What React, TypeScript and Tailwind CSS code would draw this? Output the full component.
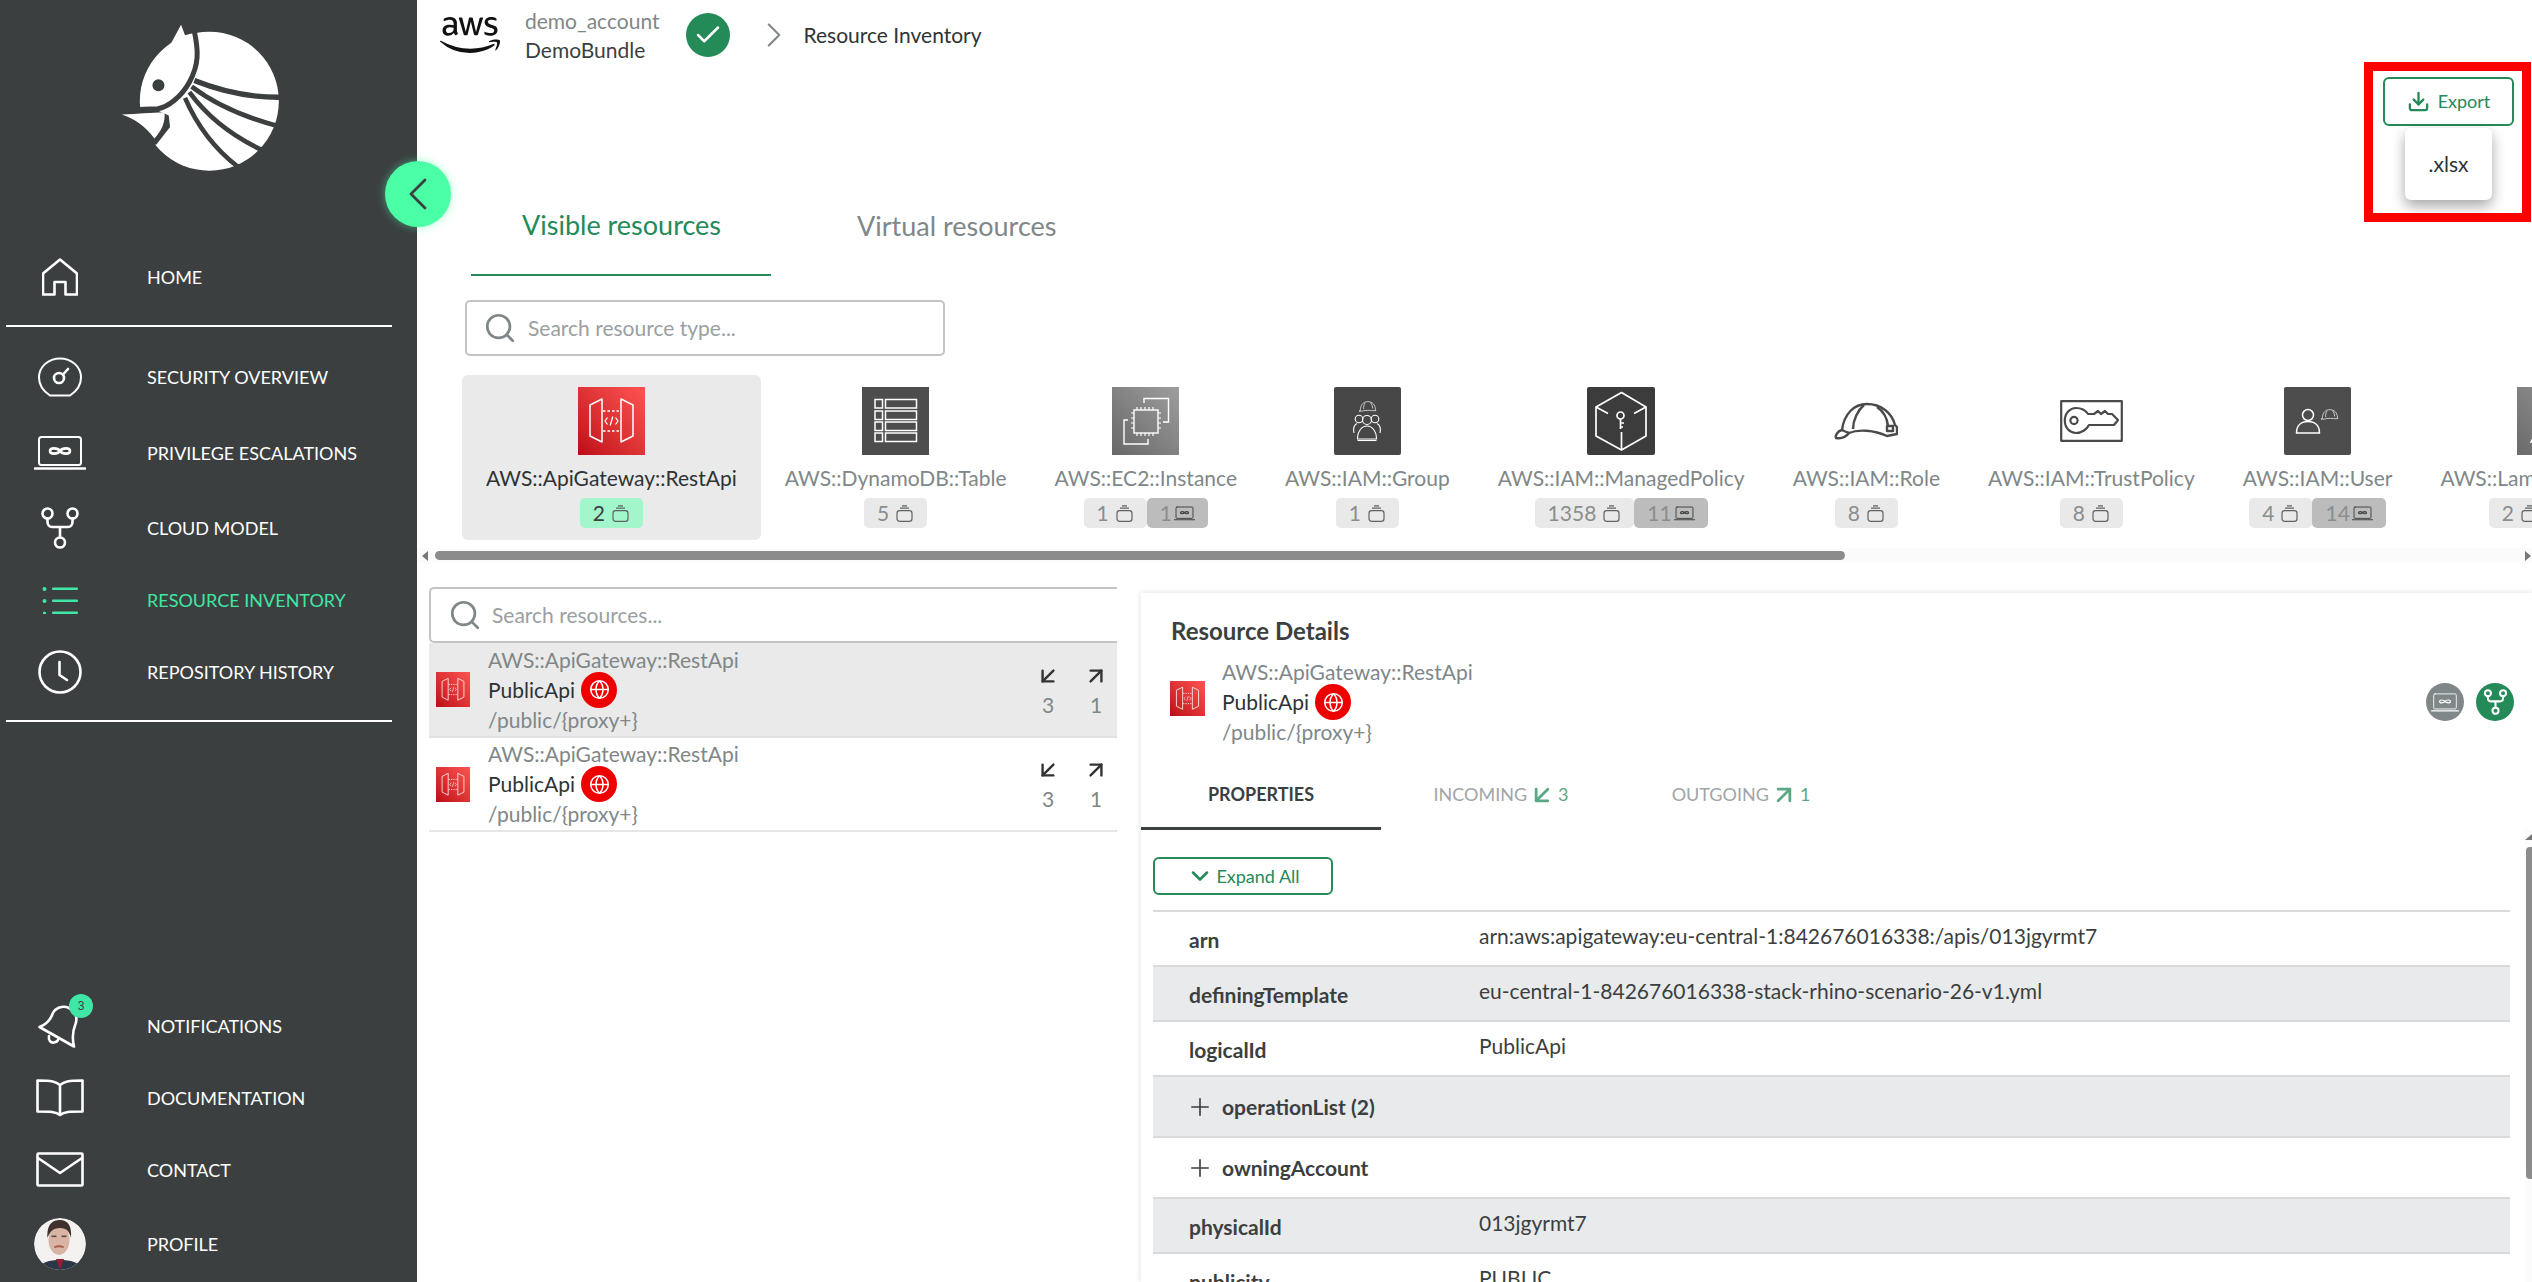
import React from "react";
import { ArrowDownLeft, ArrowUpRight, ChevronDown, ChevronLeft, ChevronRight, Check, Download, Globe, Plus, Search } from "lucide-react";
import { FaAws } from "react-icons/fa";

const Logo = () => (
  <svg viewBox="360 70 480 445" className="w-[160px] h-[148px]">
    <circle cx="625" cy="302" r="209" fill="#fff" />
    <path d="M508 132 L540 72 L552 104 L575 98 L590 150 L520 170 Z" fill="#fff" />
    <path d="M400 332 L470 330 L503 345 L507 380 L466 432 L400 445 Z" fill="#3b3f40" />
    <path d="M362 342 C410 340 450 336 490 335 C494 365 480 392 460 414 C430 375 400 355 362 342 Z" fill="#fff" />
    <g fill="none" stroke="#3b3f40" strokeLinecap="butt">
      <path d="M580 92 C592 150 595 190 565 245 C540 290 500 320 470 325 L410 327" strokeWidth="15" />
      <path d="M580 240 C660 272 750 292 845 290" strokeWidth="16" />
      <path d="M572 258 C640 310 730 350 835 378" strokeWidth="14" />
      <path d="M565 275 C620 350 700 410 785 450" strokeWidth="14" />
      <path d="M552 292 C590 380 640 445 712 500" strokeWidth="14" />
    </g>
    <circle cx="472" cy="254" r="18" fill="#3b3f40" />
  </svg>
);

const HomeIcon = () => (
  <svg viewBox="0 0 36 38" className="w-[36px] h-[38px]" fill="none" stroke="#fff" strokeWidth="2.6" strokeLinejoin="round">
    <path d="M18 1.5 L35 15.5 V36.5 H23.5 V24 H12.5 V36.5 H1 V15.5 Z" />
  </svg>
);
const GaugeIcon = () => (
  <svg viewBox="0 0 44 40" className="w-[44px] h-[40px]" fill="none" stroke="#fff" strokeWidth="2" strokeLinecap="round">
    <path d="M12 38.5 H32 C39 34 43 28 43 20.5 C43 9.5 33.5 1.5 22 1.5 C10.5 1.5 1 9.5 1 20.5 C1 28 5 34 12 38.5 Z" />
    <circle cx="21" cy="21" r="5" strokeWidth="2.6" />
    <path d="M25 17.5 L30 12" strokeWidth="2.6" />
  </svg>
);
const LaptopIcon = ({ className = "w-[52px] h-[34px]", color = "#fff", sw = 2 }: { className?: string; color?: string; sw?: number }) => (
  <svg viewBox="0 0 52 34" className={className} fill="none" stroke={color} strokeWidth={sw} strokeLinecap="round">
    <rect x="5" y="1" width="42" height="28" rx="2.5" />
    <path d="M1 32.5 H51" strokeWidth={sw + 0.6} />
    <path d="M26 15 C23.5 11.5 16 11.5 16 15 C16 18.5 23.5 18.5 26 15 C28.5 11.5 36 11.5 36 15 C36 18.5 28.5 18.5 26 15 Z" strokeWidth={sw + 0.6} />
  </svg>
);
const ModelIcon = ({ className = "w-[38px] h-[42px]", color = "#fff", sw = 2.6 }: { className?: string; color?: string; sw?: number }) => (
  <svg viewBox="0 0 38 42" className={className} fill="none" stroke={color} strokeWidth={sw} strokeLinecap="round">
    <circle cx="6.5" cy="6.5" r="5" />
    <circle cx="31.5" cy="6.5" r="5" />
    <circle cx="19" cy="35.5" r="5" />
    <path d="M6.5 11.5 V15 C6.5 18 8.5 20 11 20 H27 C29.5 20 31.5 18 31.5 15 V11.5 M19 20 V30.5" />
  </svg>
);
const ListIcon = () => (
  <svg viewBox="0 0 36 28" className="w-[36px] h-[28px]" fill="#41e6a4">
    <circle cx="2.5" cy="3" r="2" />
    <circle cx="2.5" cy="15" r="2" />
    <circle cx="2.5" cy="27" r="1.6" />
    <rect x="10" y="1.5" width="26" height="2.6" rx="1" />
    <rect x="10" y="13.5" width="26" height="2.6" rx="1" />
    <rect x="10" y="25.4" width="26" height="2.6" rx="1" />
  </svg>
);
const ClockIcon = () => (
  <svg viewBox="0 0 44 44" className="w-[44px] h-[44px]" fill="none" stroke="#fff" strokeWidth="2.6" strokeLinecap="round" strokeLinejoin="round">
    <circle cx="22" cy="22" r="20.5" />
    <path d="M21.5 12 V25 L29 30" />
  </svg>
);
const BellIcon = () => (
  <div className="relative w-[44px] h-[44px]">
    <svg viewBox="0 0 44 44" className="w-[44px] h-[44px]" fill="none" stroke="#fff" strokeWidth="2.6" strokeLinejoin="round" strokeLinecap="round">
      <path d="M1.5 23 C7 21 12 17 14.5 10 C17 3.5 25 1 31 4 C37 7 40 13 37.5 20 C35 26 33.5 32 36 42.5 Z" />
      <path d="M11 32 C10 36.5 13 39 16 38.5 C18 38.2 19.5 37.2 20 36" />
    </svg>
    <span className="absolute -top-[10px] right-[-11px] w-[24px] h-[24px] rounded-full bg-[#41e6a4] flex items-center justify-center text-[12px] leading-none text-[#3b3f40] font-['Liberation_Sans',sans-serif]">3</span>
  </div>
);
const BookIcon = () => (
  <svg viewBox="0 0 48 38" className="w-[48px] h-[38px]" fill="none" stroke="#fff" strokeWidth="2.6" strokeLinejoin="round">
    <path d="M24 6 C20 2.5 16 1.5 1.5 1.5 V32.5 C14 32.5 20 32.5 24 36 C28 32.5 34 32.5 46.5 32.5 V1.5 C32 1.5 28 2.5 24 6 Z M24 6 V36" />
  </svg>
);
const MailIcon = () => (
  <svg viewBox="0 0 48 36" className="w-[48px] h-[36px]" fill="none" stroke="#fff" strokeWidth="2.6" strokeLinejoin="round">
    <rect x="1.5" y="1.5" width="45" height="32" rx="1" />
    <path d="M2 6 L24 21 L46 6" />
  </svg>
);
const Avatar = () => (
  <svg viewBox="0 0 52 52" className="w-[52px] h-[52px] rounded-full overflow-hidden">
    <clipPath id="av"><circle cx="26" cy="26" r="26" /></clipPath>
    <g clipPath="url(#av)">
      <rect width="52" height="52" fill="#f3f2f0" />
      <g className="blur-[0.6px]">
        <path d="M4 52 C6 44 16 42 26 42 C36 42 46 44 48 52 Z" fill="#2b3648" />
        <path d="M22 41 L26 52 L30 41 Z" fill="#8f2035" />
        <ellipse cx="25" cy="22" rx="10.5" ry="15" fill="#d9b3a3" />
        <path d="M13.5 20 C12.5 6 19 2 26 2 C34 2 38 8 37 20 C35.5 14 33 10 26 10 C19 10 15.5 14 13.5 20 Z" fill="#3f322c" />
        <path d="M20 28.5 Q25 26 30 28.5 L29.5 30 Q25 28.6 20.5 30 Z" fill="#a2604d" />
        <rect x="17.5" y="17.5" width="5" height="1.6" fill="#5a4a44" />
        <rect x="27.5" y="17.5" width="5" height="1.6" fill="#5a4a44" />
      </g>
    </g>
  </svg>
);

const ApiIcon = ({ className = "w-[67px] h-[68px]" }: { className?: string }) => (
  <div className={`${className} bg-linear-to-tr from-[#bd0816] to-[#ff5252] shrink-0`}>
    <svg viewBox="0 0 67 68" className="w-full h-full" fill="none" stroke="#fff" strokeWidth="1.5">
      <path d="M24 12 L12 18 V49 L24 55 Z M43 12 L55 18 V49 L43 55 Z" strokeLinejoin="round" />
      <path d="M25 24 H42 M25 44 H42" strokeDasharray="2.5 2" />
      <path d="M29.5 30.5 L27 34 L29.5 37.5 M37.5 30.5 L40 34 L37.5 37.5 M34.8 29.5 L32.2 38.5" strokeWidth="1.2" />
    </svg>
  </div>
);
const DynamoIcon = () => (
  <div className="w-[67px] h-[68px] bg-[#4d4d4d] shrink-0">
    <svg viewBox="0 0 67 68" className="w-full h-full" fill="none" stroke="#fff" strokeWidth="1.5">
      {[12.5, 24, 35, 46].map((y) => (
        <g key={y}>
          <rect x="13" y={y} width="7.5" height="8.5" />
          <rect x="23.5" y={y} width="31" height="8.5" />
        </g>
      ))}
    </svg>
  </div>
);
const Ec2Icon = () => (
  <div className="w-[67px] h-[68px] bg-linear-to-tr from-[#686868] to-[#9e9e9e] shrink-0">
    <svg viewBox="0 0 67 68" className="w-full h-full" fill="none" stroke="#fff" strokeWidth="1.4">
      <rect x="22" y="23" width="24" height="23" />
      <path d="M25 23 V20 M29 23 V20 M33 23 V20 M37 23 V20 M41 23 V20 M25 49 V46 M29 49 V46 M33 49 V46 M37 49 V46 M41 49 V46 M19 26 H22 M19 31 H22 M19 36 H22 M19 41 H22 M46 26 H49 M46 31 H49 M46 36 H49 M46 41 H49" strokeWidth="1.2" />
      <path d="M32 16 V11.5 H56.5 V35 H51 M16 33 H12 V57 H36 V52" />
    </svg>
  </div>
);
const MiniHelmet = ({ x, y, s = 1, color = "#fff" }: { x: number; y: number; s?: number; color?: string }) => (
  <g transform={`translate(${x} ${y}) scale(${s})`} fill="none" stroke={color} strokeWidth="1">
    <path d="M2 14 C2 6 6 1 13 1 C20 1 24 6 24 12 L25 14 C22 15 15 13 9 14 C6 14.5 3 15.5 0 14.8 Z" />
    <path d="M9 3 C7 6 6.5 9 7 12 M17 2.5 C19 5 20 8 20 11" />
  </g>
);
const GroupIcon = () => (
  <div className="w-[67px] h-[68px] bg-[#474747] rounded-[2px] shrink-0">
    <svg viewBox="0 0 67 68" className="w-full h-full" fill="none" stroke="#fff" strokeWidth="1.1">
      <MiniHelmet x={25} y={14} s={0.68} />
      <circle cx="25" cy="32" r="3.8" />
      <circle cx="41" cy="32" r="3.8" />
      <circle cx="33" cy="33" r="4.5" />
      <path d="M20 46 C19 41 20 38 23 36.5 M46 46 C47 41 46 38 43 36.5" />
      <path d="M23.5 52 C23.5 44 28 39 33 39 C38 39 42.5 44 42.5 52 Z" />
      <path d="M23.5 53.5 H42.5" />
    </svg>
  </div>
);
const PolicyIcon = () => (
  <div className="w-[68px] h-[68px] bg-[#3c3c3c] rounded-[2px] shrink-0">
    <svg viewBox="0 0 68 68" className="w-full h-full" fill="none" stroke="#fff" strokeWidth="1.7" strokeLinejoin="round">
      <path d="M34.5 5.5 L59 20 V49 L34.5 63 L9 49 V20 Z" />
      <path d="M9 20 L21 26.5 M59 20 L47 26.5 M34.5 63 V45" />
      <circle cx="33.5" cy="28.5" r="3.5" />
      <path d="M33.5 32 V42 M33.5 36 H37 M33.5 40 H36" />
    </svg>
  </div>
);
const HelmetIcon = () => (
  <div className="w-[67px] h-[68px] shrink-0 flex items-center justify-center">
    <svg viewBox="0 0 64 38" className="w-[64px] h-[38px]" fill="none" stroke="#4a4a4a" strokeWidth="2.4" strokeLinejoin="round">
      <path d="M8 28 C10 12 20 2 33 2 C47 2 58 11 61 23 L63 25 V32 L53 34 C40 28 24 27 15 31" />
      <path d="M8 28 C4 29 1 33 2 36 C8 37 12 35 15 31 C12 30 10 29 8 28 Z" />
      <path d="M30 3 C24 8 19 18 19 27 M43 5 C49 9 53 15 54 24" />
      <rect x="53" y="24" width="6" height="5" />
    </svg>
  </div>
);
const TrustIcon = () => (
  <div className="w-[67px] h-[68px] shrink-0 flex items-center justify-center">
    <svg viewBox="0 0 63 42" className="w-[63px] h-[42px]" fill="none" stroke="#4a4a4a" strokeWidth="2.2" strokeLinejoin="round">
      <rect x="1.2" y="1.2" width="60.6" height="39.6" />
      <circle cx="14" cy="20.5" r="3.6" />
      <path d="M4.8 20.5 C4.8 13 10 8 16 8 C22 8 26 11 28 14 L34 14 L38 11 L41 14 L45 11 L48 14 L52 14 L58 20 L54 25 H29 C27 29 22 33 16 33 C10 33 4.8 28 4.8 20.5 Z" />
    </svg>
  </div>
);
const UserIcon = () => (
  <div className="w-[67px] h-[68px] bg-[#4d4d4d] rounded-[2px] shrink-0">
    <svg viewBox="0 0 67 68" className="w-full h-full" fill="none" stroke="#fff" strokeWidth="1.5">
      <circle cx="24" cy="28" r="5.5" />
      <path d="M12.5 46 C12.5 38 17.5 34.5 24 34.5 C30.5 34.5 35.5 38 35.5 46 Z" />
      <MiniHelmet x={37} y={22} s={0.68} />
    </svg>
  </div>
);
const LambdaIcon = () => (
  <div className="w-[67px] h-[68px] bg-linear-to-tr from-[#6a6a6a] to-[#9a9a9a] shrink-0">
    <svg viewBox="0 0 67 68" className="w-full h-full" fill="none" stroke="#fff" strokeWidth="1.5">
      <path d="M14 55 L28 26 L26 16 H20 V11 H32 L44 50 H53 V55 H40 L31 33 L22 55 Z" />
    </svg>
  </div>
);

const CubeGlyph = () => (
  <svg viewBox="0 0 17 17" className="w-[17px] h-[17px] shrink-0" fill="none" stroke="#5f6363" strokeWidth="1.2">
    <path d="M6 0.8 H11 M4 3.2 H13" />
    <rect x="1" y="5.6" width="15" height="10.8" rx="2.6" />
  </svg>
);

type BadgeProps = { n: string; v?: string; active?: boolean };
const Badges = ({ n, v, active }: BadgeProps) => (
  <div className={`mt-[5px] flex h-[30px] text-[21px] leading-[30px] ${active ? "text-[#3b3f40]" : "text-[#8a8e8f]"}`}>
    <span className={`flex items-center gap-[7px] pl-[13px] pr-[14px] rounded-[5px] ${active ? "bg-[#a3f5cc]" : "bg-[#e9e9e9]"}`}>
      {n}
      <CubeGlyph />
    </span>
    {v && (
      <span className="flex items-center gap-[2px] px-[13px] rounded-[5px] bg-[#bcbcbc]">
        {v}
        <LaptopIcon className="w-[21px] h-[15px]" color="#3f4344" sw={2.4} />
      </span>
    )}
  </div>
);

const cards: { icon: React.ReactNode; label: string; n: string; v?: string; active?: boolean }[] = [
  { icon: <ApiIcon />, label: "AWS::ApiGateway::RestApi", n: "2", active: true },
  { icon: <DynamoIcon />, label: "AWS::DynamoDB::Table", n: "5" },
  { icon: <Ec2Icon />, label: "AWS::EC2::Instance", n: "1", v: "1" },
  { icon: <GroupIcon />, label: "AWS::IAM::Group", n: "1" },
  { icon: <PolicyIcon />, label: "AWS::IAM::ManagedPolicy", n: "1358", v: "11" },
  { icon: <HelmetIcon />, label: "AWS::IAM::Role", n: "8" },
  { icon: <TrustIcon />, label: "AWS::IAM::TrustPolicy", n: "8" },
  { icon: <UserIcon />, label: "AWS::IAM::User", n: "4", v: "14" },
  { icon: <LambdaIcon />, label: "AWS::Lambda::Function", n: "2", v: "2" },
];

const NavRow = ({ icon, label, active }: { icon: React.ReactNode; label: string; active?: boolean }) => (
  <div className="flex items-center h-[72px] shrink-0">
    <div className="w-[120px] flex justify-center shrink-0">{icon}</div>
    <span className={`ml-[27px] text-[18px] ${active ? "text-[#41e6a4]" : "text-white"}`}>{label}</span>
  </div>
);

const GlobeBadge = () => (
  <span className="w-[36px] h-[36px] rounded-full bg-[#ee0000] flex items-center justify-center shrink-0">
    <Globe size={21} color="#fff" strokeWidth={1.8} />
  </span>
);

const ResourceText = () => (
  <div className="flex flex-col text-[21px] leading-[30px]">
    <span className="text-[#808788]">AWS::ApiGateway::RestApi</span>
    <span className="flex items-center gap-[6px] h-[30px] text-[#2f3334]">
      PublicApi
      <GlobeBadge />
    </span>
    <span className="text-[#808788]">/public/{"{proxy+}"}</span>
  </div>
);

const ListRow = ({ selected }: { selected?: boolean }) => (
  <div className={`flex items-center border-b-2 pl-[7px] ${selected ? "h-[95px] bg-[#eaeaea] border-[#e2e2e2]" : "h-[94px] border-[#e6e6e6]"}`}>
    <ApiIcon className="w-[34px] h-[35px]" />
    <div className="ml-[18px] flex-1">
      <ResourceText />
    </div>
    <div className="flex gap-[28px] pr-[11px] text-[21px] text-[#808788]">
      <div className="w-[20px] flex flex-col items-center gap-[4px]">
        <ArrowDownLeft size={26} color="#333" strokeWidth={2.2} />
        <span className="leading-[24px]">3</span>
      </div>
      <div className="w-[20px] flex flex-col items-center gap-[4px]">
        <ArrowUpRight size={26} color="#333" strokeWidth={2.2} />
        <span className="leading-[24px]">1</span>
      </div>
    </div>
  </div>
);

const Prop = ({ k, v, striped, expand }: { k: string; v?: string; striped?: boolean; expand?: boolean }) => (
  <div className={`flex border-b-2 border-[#d8dadb] ${expand ? "h-[61px] items-center" : "h-[55px]"} ${striped ? "bg-[#e9eaeb]" : ""}`}>
    {expand ? (
      <div className="flex items-center pl-[33px] text-[21px] font-bold text-[#3b3f40]">
        <Plus size={28} color="#3b3f40" strokeWidth={1.4} />
        <span className="ml-[8px]">{k}</span>
      </div>
    ) : (
      <>
        <span className="w-[326px] pl-[36px] pt-[14px] text-[21px] leading-[28px] font-bold text-[#3b3f40] shrink-0">{k}</span>
        <span className="pt-[10px] text-[21px] leading-[28px] text-[#3b3f40]">{v}</span>
      </>
    )}
  </div>
);

export default function App() {
  return (
    <div className="relative flex w-[2532px] h-[1282px] overflow-hidden bg-white font-[Lato,sans-serif]">
      <aside className="w-[417px] shrink-0 bg-[#3b3f40] flex flex-col">
        <div className="mt-[24px] ml-[121px] h-[148px] shrink-0">
          <Logo />
        </div>
        <div className="mt-[69px]">
          <NavRow icon={<HomeIcon />} label="HOME" />
        </div>
        <div className="mt-[12px] mx-[6px] w-[386px] h-[2px] bg-white shrink-0" />
        <div className="mt-[14px]">
          <NavRow icon={<GaugeIcon />} label="SECURITY OVERVIEW" />
        </div>
        <div className="mt-[4px]">
          <NavRow icon={<LaptopIcon />} label="PRIVILEGE ESCALATIONS" />
        </div>
        <div className="mt-[3px]">
          <NavRow icon={<ModelIcon />} label="CLOUD MODEL" />
        </div>
        <NavRow icon={<ListIcon />} label="RESOURCE INVENTORY" active />
        <NavRow icon={<ClockIcon />} label="REPOSITORY HISTORY" />
        <div className="mt-[12px] mx-[6px] w-[386px] h-[2px] bg-white shrink-0" />
        <div className="mt-auto pb-[2px]">
          <NavRow icon={<BellIcon />} label="NOTIFICATIONS" />
          <NavRow icon={<BookIcon />} label="DOCUMENTATION" />
          <NavRow icon={<MailIcon />} label="CONTACT" />
          <div className="mt-[2px]">
            <NavRow icon={<Avatar />} label="PROFILE" />
          </div>
        </div>
      </aside>

      <button className="absolute left-[385px] top-[161px] w-[66px] h-[66px] rounded-full bg-[#4affa5] shadow-[0_0_8px_rgba(74,255,165,0.5)] flex items-center justify-center">
        <ChevronLeft size={56} color="#3b3f40" strokeWidth={1.2} />
      </button>

      <main className="flex-1 min-w-0 flex flex-col">
        <header className="h-[70px] shrink-0 flex items-center pl-[23px]">
          <FaAws className="text-[60px] text-[#111] shrink-0" />
          <div className="ml-[25px] flex flex-col text-[21px] leading-[29px]">
            <span className="text-[#808788]">demo_account</span>
            <span className="text-[#3b3f40]">DemoBundle</span>
          </div>
          <span className="ml-[26px] w-[44px] h-[44px] rounded-full bg-[#238a58] flex items-center justify-center">
            <Check size={30} color="#fff" strokeWidth={2} />
          </span>
          <ChevronRight size={42} color="#808788" strokeWidth={1.2} className="ml-[23px]" />
          <span className="ml-[9px] text-[21px] text-[#2f3334]">Resource Inventory</span>
        </header>

        <div className="h-[106px] shrink-0 flex justify-end pr-[18px] pt-[7px]">
          <div className="relative w-[131px] h-[49px]">
            <button className="w-full h-full rounded-[6px] border-2 border-[#238a58] flex items-center justify-center gap-[8px] text-[18px] text-[#238a58]">
              <Download size={23} strokeWidth={2.4} />
              Export
            </button>
            <div className="absolute left-[22px] top-[51px] w-[87px] h-[72px] rounded-[6px] bg-white shadow-[0_6px_14px_rgba(0,0,0,0.35)] flex items-center justify-center text-[21px] text-[#2f3334]">.xlsx</div>
            <div className="absolute left-[-19px] top-[-15px] w-[167px] h-[160px] border-[9px] border-[#ff0000] pointer-events-none" />
          </div>
        </div>

        <div className="ml-[54px] flex h-[100px] shrink-0">
          <div className="w-[300px] border-b-2 border-[#238a58] pl-[51px] flex items-center text-[27px] text-[#238a58]">Visible resources</div>
          <div className="pl-[86px] flex items-center text-[27px] text-[#7f8788]">Virtual resources</div>
        </div>

        <div className="mt-[24px] ml-[48px] w-[480px] h-[56px] shrink-0 border-2 border-[#c4c4c4] rounded-[5px] flex items-center pl-[16px] text-[21px] text-[#9aa0a1]">
          <Search size={34} color="#7f8788" strokeWidth={1.9} />
          <span className="ml-[11px]">Search resource type...</span>
        </div>

        <div className="mt-[19px] ml-[45px] flex shrink-0 overflow-hidden">
          {cards.map((c) => (
            <div key={c.label} className={`shrink-0 flex flex-col items-center px-[24px] pt-[12px] pb-[12px] rounded-[6px] ${c.active ? "bg-[#eaeaea]" : ""}`}>
              {c.icon}
              <span className={`mt-[8px] text-[21px] leading-[30px] whitespace-nowrap ${c.active ? "text-[#2f3334]" : "text-[#808788]"}`}>{c.label}</span>
              <Badges n={c.n} v={c.v} active={c.active} />
            </div>
          ))}
        </div>

        <div className="mt-[8px] h-[15px] shrink-0 bg-[#fbfbfb] flex items-center pl-[5px] pr-[1px]">
          <svg viewBox="0 0 6 10" className="w-[6px] h-[10px]"><path d="M6 0 V10 L0 5 Z" fill="#777" /></svg>
          <div className="ml-[7px] w-[1410px] h-[9px] rounded-full bg-[#8c8c8c]" />
          <svg viewBox="0 0 6 10" className="w-[6px] h-[10px] ml-auto"><path d="M0 0 V10 L6 5 Z" fill="#777" /></svg>
        </div>

        <div className="flex-1 min-h-0 flex">
          <section className="ml-[12px] mt-[24px] w-[688px] shrink-0">
            <div className="h-[56px] border-2 border-r-0 border-[#c4c4c4] rounded-l-[5px] flex items-center pl-[17px] text-[21px] text-[#9aa0a1]">
              <Search size={34} color="#7f8788" strokeWidth={1.9} />
              <span className="ml-[10px]">Search resources...</span>
            </div>
            <ListRow selected />
            <ListRow />
          </section>

          <section className="ml-[24px] mt-[30px] flex-1 min-w-0 flex flex-col shadow-[0_0_6px_rgba(0,0,0,0.14)]">
            <h2 className="mt-[24px] ml-[30px] text-[24px] leading-[28px] font-bold text-[#3b3f40]">Resource Details</h2>
            <div className="mt-[12px] ml-[29px] mr-[18px] flex items-start">
              <div className="mt-[24px]">
                <ApiIcon className="w-[35px] h-[35px]" />
              </div>
              <div className="ml-[17px] flex-1">
                <ResourceText />
              </div>
              <div className="mt-[26px] flex gap-[12px]">
                <span className="w-[38px] h-[38px] rounded-full bg-[#7f8788] flex items-center justify-center">
                  <LaptopIcon className="w-[28px] h-[19px]" sw={1.6} />
                </span>
                <span className="w-[38px] h-[38px] rounded-full bg-[#238a58] flex items-center justify-center">
                  <ModelIcon className="w-[23px] h-[26px]" sw={3.4} />
                </span>
              </div>
            </div>
            <div className="mt-[12px] flex h-[71px] shrink-0 text-[18px]">
              <div className="w-[240px] pt-[2px] border-b-[3px] border-[#3b3f40] flex items-center justify-center font-bold text-[#3b3f40]">PROPERTIES</div>
              <div className="w-[240px] flex items-center justify-center gap-[1px] text-[#a0a5a6]">
                INCOMING
                <ArrowDownLeft size={28} color="#5ba884" strokeWidth={2.4} />
                <span className="text-[#5ba884] ml-[1px]">3</span>
              </div>
              <div className="w-[240px] flex items-center justify-center gap-[1px] text-[#a0a5a6]">
                OUTGOING
                <ArrowUpRight size={28} color="#5ba884" strokeWidth={2.4} />
                <span className="text-[#5ba884] ml-[1px]">1</span>
              </div>
            </div>
            <div className="flex-1 min-h-0 flex">
              <div className="flex-1 min-w-0 pl-[12px] overflow-hidden">
                <button className="mt-[27px] w-[180px] h-[38px] rounded-[6px] border-2 border-[#238a58] flex items-center justify-center gap-[2px] text-[18px] text-[#238a58]">
                  <ChevronDown size={28} strokeWidth={2.2} />
                  Expand All
                </button>
                <div className="mt-[15px] border-t-2 border-[#d8dadb]">
                  <Prop k="arn" v="arn:aws:apigateway:eu-central-1:842676016338:/apis/013jgyrmt7" />
                  <Prop k="definingTemplate" v="eu-central-1-842676016338-stack-rhino-scenario-26-v1.yml" striped />
                  <Prop k="logicalId" v="PublicApi" />
                  <Prop k="operationList (2)" striped expand />
                  <Prop k="owningAccount" expand />
                  <Prop k="physicalId" v="013jgyrmt7" striped />
                  <Prop k="publicity" v="PUBLIC" />
                </div>
              </div>
              <div className="ml-[15px] w-[7px] shrink-0 bg-[#fbfbfb] flex flex-col items-end pt-[4px]">
                <svg viewBox="0 0 7 6" className="w-[7px] h-[6px]"><path d="M0 6 H7 V0 Z" fill="#777" /></svg>
                <div className="mt-[7px] w-[6px] h-[332px] rounded-tl-[4px] rounded-bl-[4px] bg-[#8c8c8c]" />
              </div>
            </div>
          </section>
        </div>
      </main>
    </div>
  );
}
